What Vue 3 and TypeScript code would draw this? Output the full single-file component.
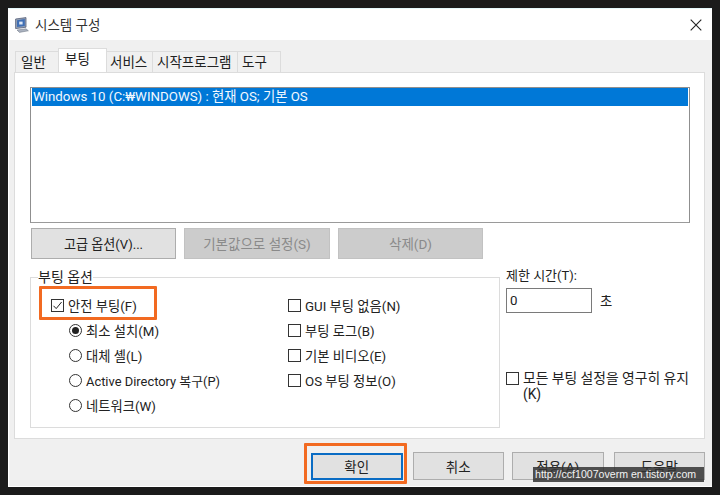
<script setup lang="ts">
const tabs = ['일반', '부팅', '서비스', '시작프로그램', '도구']
const radios = [
  { label: '최소 설치(M)', on: true },
  { label: '대체 셸(L)', on: false },
  { label: 'Active Directory 복구(P)', on: false },
  { label: '네트워크(W)', on: false },
]
const flags = ['GUI 부팅 없음(N)', '부팅 로그(B)', '기본 비디오(E)', 'OS 부팅 정보(O)']
</script>

<template>
  <div class="page">
    <div class="window">
      <header class="titlebar">
        <svg class="appicon" width="14" height="16" viewBox="0 0 14 16">
          <path d="M.6 2 11 .6v9.6L.6 11.6z" fill="#98a3b5" stroke="#55607a" stroke-width=".8" />
          <path d="M2 3.2 9.8 2.1v7L2 10.1z" fill="#3f6fb5" />
          <path d="M4.2 4.6h3.4v2.9H4.2z" fill="#dfe9f6" />
          <path d="M2 13l9-1.2 2.4 2-9 1.6z" fill="#aab2bf" stroke="#6b7280" stroke-width=".5" />
        </svg>
        <span class="title">시스템 구성</span>
        <svg class="close" width="12" height="12" viewBox="0 0 12 12">
          <path d="M.7.7l10.6 10.6M11.3.7.7 11.3" stroke="#222" stroke-width="1.1" fill="none" />
        </svg>
      </header>

      <div class="content">
        <nav class="tabs">
          <span v-for="(t, i) in tabs" :key="t" class="tab" :class="['t' + i, { active: i === 1 }]">{{ t }}</span>
        </nav>

        <section class="panel">
          <div class="listbox">
            <div class="selected">Windows 10 (C:₩WINDOWS) : 현재 OS; 기본 OS</div>
          </div>

          <div class="listbuttons">
            <button class="btn wide first">고급 옵션(V)...</button>
            <button class="btn wide off">기본값으로 설정(S)</button>
            <button class="btn wide off">삭제(D)</button>
          </div>

          <div class="options">
            <fieldset class="group">
              <legend>부팅 옵션</legend>
              <div class="col left">
                <label class="row safe"><i class="box checked">
                  <svg width="11" height="11" viewBox="0 0 11 11"><path d="M1.5 5.8 4.2 8.6 9.6 2" stroke="#222" stroke-width="1" fill="none" /></svg>
                </i>안전 부팅(F)</label>
                <label v-for="r in radios" :key="r.label" class="row radio-row">
                  <i class="radio" :class="{ on: r.on }"></i>{{ r.label }}
                </label>
              </div>
              <div class="col right">
                <label v-for="f in flags" :key="f" class="row"><i class="box"></i>{{ f }}</label>
              </div>
            </fieldset>

            <aside class="timeout">
              <div class="tlabel">제한 시간(T):</div>
              <div class="tinput">
                <span class="input">0</span>
                <span>초</span>
              </div>
              <label class="keep"><i class="box"></i><span>모든 부팅 설정을 영구히 유지<br />(K)</span></label>
            </aside>
          </div>
        </section>

        <footer class="actions">
          <button class="btn act primary">확인</button>
          <button class="btn act cancel">취소</button>
          <button class="btn act apply">적용(A)</button>
          <button class="btn act help">도움말</button>
        </footer>
      </div>
    </div>

    <div class="mark mark-safe"></div>
    <div class="mark mark-ok"></div>
    <div class="watermark">http://ccf1007overm en.tistory.com</div>
  </div>
</template>

<style>
html, body { margin: 0; background: #1c1c1c; }
</style>

<style scoped>
.page {
  position: relative;
  width: 720px;
  height: 495px;
  padding: 8px;
  box-sizing: border-box;
  background: #1b1b1b;
  overflow: hidden;
  font-family: Roboto, "Noto Sans CJK KR", sans-serif;
  font-size: 13.3px;
  color: #222;
}
.window {
  width: 704px;
  height: 479px;
  background: #f0f0f0;
  border-bottom: 1px solid #fff;
  box-sizing: border-box;
  display: flex;
  flex-direction: column;
}
.titlebar {
  flex: none;
  height: 32px;
  background: #fff;
  border-top: 1px solid #e4f8fc;
  box-sizing: border-box;
  display: flex;
  align-items: center;
  padding: 0 10px 0 7px;
}
.appicon { flex: none; margin-top: 1px; }
.title { margin-left: 6px; font-size: 13.5px; color: #333; padding-bottom: 2px; }
.close { margin-left: auto; margin-top: 1px; }
.content {
  flex: 1;
  padding: 10px 7px 0 5px;
  border-left: 1px solid #fff;
  box-sizing: border-box;
}
.tabs {
  display: flex;
  height: 22px;
  align-items: flex-end;
  padding-left: 2px;
}
.tab {
  height: 21px;
  box-sizing: border-box;
  display: flex;
  align-items: center;
  padding: 0 0 3px 5px;
  background: #f0f0f0;
  border: 1px solid #dcdcdc;
  border-bottom: 0;
  margin-left: -1px;
  font-size: 13.5px;
}
.t0 { width: 44px; }
.t1 { width: 49px; }
.t2 { width: 47px; padding-left: 3px; }
.t3 { width: 86px; padding-left: 4px; }
.t4 { width: 44px; padding-left: 4px; }
.tab.active {
  height: 24px;
  margin-top: -2px;
  background: #fff;
  padding-bottom: 5px;
  padding-left: 6px;
  position: relative;
}
.panel {
  height: 367px;
  box-sizing: border-box;
  background: #fff;
  border: 1px solid #dcdcdc;
  padding: 14px 15px 0 15px;
}
.listbox {
  width: 660px;
  height: 136px;
  box-sizing: border-box;
  border: 1px solid #8f8f8f;
  border-bottom-color: #9a9a9a;
  background: #fff;
  padding: 0 1px;
}
.selected {
  height: 18px;
  line-height: 18px;
  padding-left: 1px;
  background: #0078d7;
  color: #f4f9ff;
  white-space: nowrap;
}
.listbuttons {
  display: flex;
  gap: 8px;
  margin: 5px 0 0 1px;
}
.btn {
  font: inherit;
  font-size: 13.5px;
  color: #222;
  background: #e1e1e1;
  border: 1px solid #adadad;
  box-sizing: border-box;
  padding: 0 0 1px;
}
.wide { width: 145px; height: 31px; }
.wide.first { font-size: 13.1px; }
.wide.off { background: #cccccc; border-color: #c2c2c2; color: #8a8a8a; }
.wide:nth-child(2) { width: 146px; }
.options {
  display: flex;
  margin-top: 10px;
}
.group {
  width: 470px;
  height: 159px;
  margin: 0;
  padding: 14px 0 0 20px;
  box-sizing: border-box;
  border: 1px solid #dcdcdc;
  display: flex;
  flex-direction: row;
}
.group legend {
  padding: 0;
  margin-left: -13px;
  line-height: 16px;
  font-size: 14px;
  margin-bottom: -6px;
}
.col { display: flex; flex-direction: column; gap: 0; }
.col.left { width: 237px; }
.row {
  height: 25px;
  display: flex;
  align-items: center;
  white-space: nowrap;
}
.box {
  flex: none;
  width: 13px;
  height: 13px;
  box-sizing: border-box;
  border: 1px solid #333;
  background: #fff;
  margin-right: 4px;
  display: flex;
  align-items: center;
  justify-content: center;
}
.radio-row { padding-left: 18px; }
.radio-row:nth-child(4) { font-size: 12.9px; }
.radio {
  flex: none;
  width: 13px;
  height: 13px;
  box-sizing: border-box;
  border: 1px solid #333;
  border-radius: 50%;
  background: #fff;
  margin-right: 4px;
  display: flex;
  align-items: center;
  justify-content: center;
}
.radio.on::after {
  content: "";
  width: 7px;
  height: 7px;
  border-radius: 50%;
  background: #222;
}
.timeout {
  margin-left: 6px;
  flex: 1;
}
.tlabel { height: 16px; line-height: 16px; margin-top: -1px; font-size: 13px; }
.tinput {
  display: flex;
  align-items: center;
  gap: 8px;
  margin-top: 4px;
}
.input {
  width: 86px;
  height: 25px;
  line-height: 23px;
  box-sizing: border-box;
  border: 1px solid #7a7a7a;
  padding-left: 3px;
}
.keep {
  display: flex;
  align-items: flex-start;
  margin-top: 57px;
  line-height: 16px;
  white-space: nowrap;
  font-size: 13.8px;
}
.keep .box { margin-top: 2px; }
.actions {
  display: flex;
  align-items: center;
  padding: 13px 0 0 297px;
}
.act { width: 92px; height: 28px; }
.act.primary { height: 27px; border: 2px solid #0a6cc4; margin-right: 10px; }
.act.cancel { margin-right: 8px; }
.act.apply { margin-right: 10px; }

.mark {
  position: absolute;
  box-sizing: border-box;
  border: 3px solid #f26a21;
  border-radius: 1px;
}
.mark-safe { left: 39px; top: 286px; width: 118px; height: 34px; }
.mark-ok { left: 304px; top: 443px; width: 103px; height: 41px; }
.watermark {
  position: absolute;
  left: 533px;
  top: 467px;
  width: 171px;
  height: 15px;
  line-height: 15px;
  background: rgba(50, 50, 50, .85);
  color: #f2f2f2;
  font-family: "Liberation Sans", sans-serif;
  font-size: 10.6px;
  padding-left: 2px;
  box-sizing: border-box;
  white-space: nowrap;
  overflow: hidden;
}
</style>
